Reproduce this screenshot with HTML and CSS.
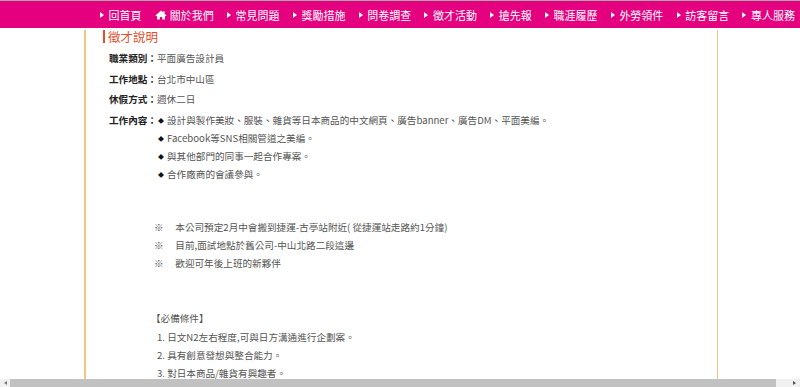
FILE: index.html
```html
<!DOCTYPE html>
<html lang="zh-Hant">
<head>
    <meta charset="UTF-8">
    <meta name="viewport" content="width=device-width, initial-scale=1.0">
    <title>徵才說明</title>
    <link rel="stylesheet" href="styles.css">
</head>
<body>
    <div class="topline"></div>
    <nav class="nav">
        <a class="nav-item"><span class="arrow"></span>回首頁</a>
        <a class="nav-item"><svg class="home" viewBox="0 0 12 10" width="12" height="10"><path d="M6 0.6 L0.4 5.4 L1.3 6.3 L2 5.7 V9.6 H4.8 V7 H7.2 V9.6 H10 V5.7 L10.7 6.3 L11.6 5.4 L9.6 3.7 V1 H8.4 V2.6 Z" fill="#fff"/></svg>關於我們</a>
        <a class="nav-item"><span class="arrow"></span>常見問題</a>
        <a class="nav-item"><span class="arrow"></span>獎勵措施</a>
        <a class="nav-item"><span class="arrow"></span>問卷調查</a>
        <a class="nav-item"><span class="arrow"></span>徵才活動</a>
        <a class="nav-item"><span class="arrow"></span>搶先報</a>
        <a class="nav-item"><span class="arrow"></span>職涯履歷</a>
        <a class="nav-item"><span class="arrow"></span>外勞領件</a>
        <a class="nav-item"><span class="arrow"></span>訪客留言</a>
        <a class="nav-item"><span class="arrow"></span>專人服務</a>
    </nav>

    <div class="content">
        <h2 class="title">徵才說明</h2>

        <div class="row"><span class="label">職業類別：</span><span class="value">平面廣告設計員</span></div>
        <div class="row"><span class="label">工作地點：</span><span class="value">台北市中山區</span></div>
        <div class="row"><span class="label">休假方式：</span><span class="value">週休二日</span></div>
        <div class="row">
            <span class="label">工作內容：</span>
            <ul class="duties">
                <li>設計與製作美妝、服裝、雜貨等日本商品的中文網頁、廣告banner、廣告DM、平面美編。</li>
                <li>Facebook等SNS相關管道之美編。</li>
                <li>與其他部門的同事一起合作專案。</li>
                <li>合作廠商的會議參與。</li>
            </ul>
        </div>

        <div class="notes">
            <p>※　 本公司預定2月中會搬到捷運-古亭站附近( 從捷運站走路約1分鐘)</p>
            <p>※　 目前,面試地點於舊公司-中山北路二段這邊</p>
            <p>※　 歡迎可年後上班的新夥伴</p>
        </div>

        <div class="require">
            <p class="require-title">【必備條件】</p>
            <p>1. 日文N2左右程度,可與日方溝通進行企劃案。</p>
            <p>2. 具有創意發想與整合能力。</p>
            <p>3. 對日本商品/雜貨有興趣者。</p>
        </div>
    </div>

    <!-- 水平捲軸 -->
    <div class="hscroll">
        <span class="hscroll-btn"><span class="tri-left"></span></span>
        <span class="hscroll-thumb"></span>
        <span class="hscroll-track"><span class="tri-right"></span></span>
    </div>
</body>
</html>
```

FILE: styles.css
```css
:root {
    --pink: #e4007f;
    --line: #f5c482;
    --title: #e0502c;
    --label: #222;
    --text: #555;
}

* {
    margin: 0;
    padding: 0;
    box-sizing: border-box;
}

html, body {
    height: 100%;
    overflow: hidden;
}

body {
    font-family: "Noto Sans", "Noto Sans CJK TC", sans-serif;
    background: #fff;
    color: var(--text);
}

.topline {
    height: 1px;
    background: #a8a8a8;
}

/* 選單 */
.nav {
    height: 27px;
    background: var(--pink);
    display: flex;
    align-items: center;
    gap: 13.3px;
    padding-left: 100px;
    white-space: nowrap;
    overflow: hidden;
}

.nav-item {
    display: flex;
    align-items: center;
    color: #fff;
    font-family: "Noto Sans CJK TC", sans-serif;
    font-size: 11px;
    line-height: 14px;
    flex-shrink: 0;
}

.arrow {
    width: 0;
    height: 0;
    border-left: 4px solid #fff;
    border-top: 3.5px solid transparent;
    border-bottom: 3.5px solid transparent;
    margin-right: 4.5px;
}

.home {
    margin-right: 3px;
}

/* 內容 */
.content {
    margin-left: 84px;
    width: 634px;
    border-left: 2px solid var(--line);
    border-right: 1px solid var(--line);
    padding: 0 0 20px 17px;
    font-family: "Noto Sans CJK TC", sans-serif;
    font-size: 9.6px;
}

.title {
    font-size: 12.5px;
    font-weight: normal;
    color: var(--title);
    line-height: 13px;
    margin-top: 2px;
    margin-bottom: 6px;
    border-left: 2px solid var(--title);
    padding-left: 3px;
    height: 13px;
}

.row {
    display: flex;
    line-height: 18px;
    margin-left: 6px;
    margin-bottom: 2.5px;
}

.label {
    width: 48px;
    flex-shrink: 0;
    color: var(--label);
    font-weight: bold;
}

.duties {
    list-style: none;
}

.duties li::before {
    content: "◆";
    display: inline-block;
    font-size: 6px;
    line-height: 6px;
    color: #111;
    margin: 0 3px 0 1px;
    vertical-align: 1px;
}

.notes {
    margin: 35px 0 0 51px;
    line-height: 18px;
}

.require {
    margin: 37px 0 0 48px;
    line-height: 18px;
}

.require-title {
    margin-bottom: 1px;
}

.require p:not(.require-title) {
    padding-left: 6px;
}

/* 水平捲軸 */
.hscroll {
    position: fixed;
    left: 0;
    right: 0;
    bottom: 0;
    height: 8px;
    display: flex;
    background: #f1f1f1;
}

.hscroll-btn {
    width: 10px;
    display: flex;
    align-items: center;
    justify-content: center;
}

.hscroll-thumb {
    width: 766px;
    background: #c1c1c1;
}

.hscroll-track {
    flex: 1;
    display: flex;
    align-items: center;
    justify-content: flex-end;
    padding-right: 4px;
}

.tri-left {
    border-right: 3px solid #777;
    border-top: 2.5px solid transparent;
    border-bottom: 2.5px solid transparent;
}

.tri-right {
    border-left: 3px solid #505050;
    border-top: 2.5px solid transparent;
    border-bottom: 2.5px solid transparent;
}
```
